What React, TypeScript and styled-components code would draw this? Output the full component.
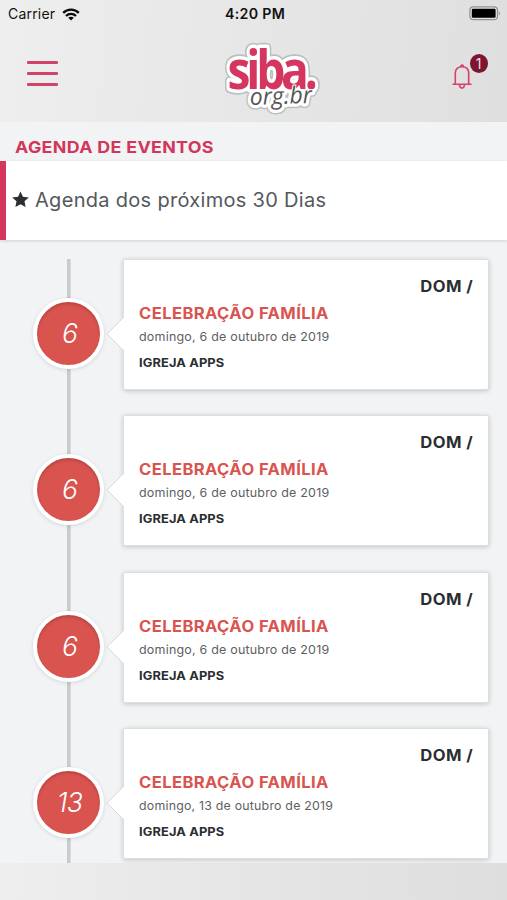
import React from "react";
import styled, { createGlobalStyle } from "styled-components";

const Global = createGlobalStyle`
  * { box-sizing: border-box; }
  body { margin: 0; background: #f1f3f5; }
`;

const Screen = styled.div`
  width: 507px;
  height: 900px;
  overflow: hidden;
  display: flex;
  flex-direction: column;
  background: #f1f3f5;
  font-family: Inter, "Open Sans", sans-serif;
  color: #2b2e31;
  white-space: nowrap;
`;

const Wide = styled.span<{ $scale: number; $origin?: string }>`
  display: inline-block;
  transform: scaleX(${(p) => p.$scale});
  transform-origin: ${(p) => p.$origin ?? "left"} center;
`;

const Header = styled.header`
  height: 122px;
  flex: none;
  background: linear-gradient(95deg, #efeeee 0%, #e7e7e7 45%, #dfdfdf 100%);
`;

const StatusBar = styled.div`
  height: 28px;
  padding: 1px 6px 0 8px;
  display: grid;
  grid-template-columns: 1fr auto 1fr;
  align-items: center;
  font-size: 14px;
  line-height: 26px;
  color: #111;
`;

const Carrier = styled.div`
  display: flex;
  align-items: center;
  gap: 7px;
  height: 26px;
  align-self: start;
  letter-spacing: 0.2px;
`;

const Clock = styled.div`
  align-self: start;
  padding-left: 1px;
  font-size: 14.2px;
  font-weight: 600;
  letter-spacing: 0.3px;
`;

const BatterySlot = styled.div`
  height: 25px;
  align-self: start;
  display: flex;
  align-items: center;
  justify-content: flex-end;
`;

const NavBar = styled.div`
  height: 93px;
  padding: 0 19px 0 27px;
  display: grid;
  grid-template-columns: 1fr 100px 1fr;
  align-items: start;
`;

const MenuButton = styled.button`
  width: 31px;
  height: 25px;
  margin-top: 33px;
  padding: 0;
  border: 0;
  background: none;
  display: flex;
  flex-direction: column;
  justify-content: space-between;
`;

const MenuLine = styled.span`
  width: 31px;
  height: 3px;
  border-radius: 1px;
  background: #cf4468;
`;

const Logo = styled.svg`
  display: block;
  width: 100px;
  height: 82px;
  margin: 10px 0 0 14.5px;
  overflow: visible;
`;

const BellButton = styled.button`
  position: relative;
  justify-self: end;
  width: 20px;
  height: 26px;
  margin: 36px 16px 0 0;
  padding: 0;
  border: 0;
  background: none;
  font-family: inherit;
`;

const Badge = styled.span`
  position: absolute;
  left: 17.5px;
  top: -10px;
  width: 18px;
  height: 19px;
  border-radius: 50%;
  background: #7b1530;
  color: #f4dfe4;
  font-size: 14px;
  line-height: 19px;
  text-align: center;
`;

const PageTitle = styled.h1`
  height: 39px;
  flex: none;
  margin: 0;
  padding: 6px 0 0 15px;
  font-size: 16.4px;
  line-height: 38px;
  font-weight: 700;
  letter-spacing: 0.3px;
  color: #d2365a;
`;

const Banner = styled.div`
  height: 79px;
  flex: none;
  padding: 0 0 2px 6px;
  display: flex;
  align-items: center;
  gap: 6px;
  border-left: 6px solid #d5365b;
  background: #fff;
  box-shadow: 0 1px 3px rgba(0, 0, 0, 0.14);
  font-size: 19.4px;
  letter-spacing: 0.3px;
  color: #55585b;
`;

const Timeline = styled.main`
  height: 623px;
  flex: none;
  overflow: hidden;
  padding: 19px 18px 0 33px;
`;

const Row = styled.article`
  height: 156.4px;
  display: grid;
  grid-template-columns: 71px 366px;
  column-gap: 19px;
  align-items: start;
`;

const Rail = styled.div`
  height: 156.4px;
  padding-top: 39px;
  display: flex;
  justify-content: center;
  background: linear-gradient(#c9cbcc, #c9cbcc) 33.6px 0 / 3.6px 100% no-repeat;
`;

const Day = styled.div`
  width: 71px;
  height: 71px;
  padding-left: 2px;
  border: 4.5px solid #fff;
  border-radius: 50%;
  background: #d9534f;
  box-shadow: 0 1px 4px rgba(0, 0, 0, 0.12), inset 0 2px 3px rgba(0, 0, 0, 0.16);
  color: #fff;
  font-size: 26.5px;
  line-height: 63px;
  font-style: italic;
  font-weight: 300;
  letter-spacing: -0.8px;
  text-align: center;
`;

const Card = styled.div`
  position: relative;
  height: 131px;
  padding: 17px 15px 0 16px;
  border: 1px solid #dcdfdf;
  border-radius: 2px;
  background: #fff;
  box-shadow: 0 1px 5px rgba(0, 0, 0, 0.2);
`;

const Pointer = styled.svg`
  position: absolute;
  left: -18px;
  top: 56px;
  width: 19px;
  height: 36px;
`;

const Weekday = styled.div`
  height: 20px;
  font-size: 15.5px;
  line-height: 20px;
  font-weight: 700;
  text-align: right;
  letter-spacing: 0.4px;
`;

const EventName = styled.h2`
  margin: 7px 0 0 -1px;
  font-size: 15.5px;
  line-height: 20px;
  font-weight: 700;
  letter-spacing: 0.4px;
  color: #d9534f;
`;

const EventDate = styled.div`
  margin: 4px 0 0 -1px;
  font-size: 12px;
  line-height: 18px;
  letter-spacing: 0.2px;
  color: #5d6063;
`;

const Organizer = styled.div`
  margin: 9px 0 0 -1px;
  font-size: 11.7px;
  line-height: 16px;
  font-weight: 700;
  letter-spacing: 0.1px;
`;

const Footer = styled.footer`
  flex: 1;
  background: linear-gradient(90deg, #efeeee 0%, #e6e6e6 45%, #dedede 100%);
`;

const events = [
  { day: "6", date: "domingo, 6 de outubro de 2019", stretch: 1.039 },
  { day: "6", date: "domingo, 6 de outubro de 2019", stretch: 1.039 },
  { day: "6", date: "domingo, 6 de outubro de 2019", stretch: 1.039 },
  { day: "13", date: "domingo, 13 de outubro de 2019", stretch: 1.031 },
];

const Wifi = () => (
  <svg width="18" height="13" viewBox="0 0 18 13" fill="none" stroke="#0b0b0b" strokeWidth="2.3">
    <path d="M1.2 4.9C5.5.5 12.5.5 16.8 4.9" />
    <path d="M4 8C6.9 5.2 11.1 5.2 14 8" />
    <path d="M6.2 9.8C7.7 8.3 10.3 8.3 11.8 9.8L9 12.6Z" fill="#0b0b0b" stroke="none" />
  </svg>
);

const Battery = () => (
  <svg width="32" height="15" viewBox="0 0 32 15">
    <rect x="0.9" y="0.9" width="27.6" height="12.8" rx="3.5" fill="#e2e2e2" stroke="#929292" strokeWidth="1.2" />
    <rect x="2.8" y="2.8" width="23.8" height="9" rx="1.2" fill="#000" />
    <path d="M29.8 5.2q2 2.1 0 4.2z" fill="#858585" />
  </svg>
);

const SibaLogo = () => (
  <Logo viewBox="0 0 100 82" strokeLinejoin="round">
    <defs>
      <text id="siba" transform="translate(5.5 51) scale(.87 1)" fontFamily="Open Sans" fontWeight="700" fontSize="53" letterSpacing="-4.8">siba.</text>
      <text id="orgbr" transform="translate(28 67) rotate(-2)" fontFamily="Open Sans" fontStyle="italic" fontSize="23.5" textLength="62" lengthAdjust="spacingAndGlyphs">org.br</text>
    </defs>
    <g fill="#b9c1c0" stroke="#b9c1c0">
      <use href="#siba" strokeWidth="10.5" />
      <use href="#orgbr" strokeWidth="9.5" />
    </g>
    <g fill="#fff" stroke="#fff">
      <use href="#siba" strokeWidth="7" />
      <use href="#orgbr" strokeWidth="6.5" />
    </g>
    <use href="#siba" fill="#d5365f" />
    <use href="#orgbr" fill="#555" stroke="#fff" strokeWidth="2" paintOrder="stroke" />
  </Logo>
);

const Bell = () => (
  <svg width="20" height="26" viewBox="0 0 20 26" fill="none" stroke="#d5426a" strokeWidth="1.6" strokeLinejoin="round" strokeLinecap="round">
    <path d="M1 20.2H19M3.3 20V9.3C3.3 5 6 2.8 10 2.8S16.7 5 16.7 9.3V20" />
    <path d="M8.6 2.6C8.6.6 11.4.6 11.4 2.6M7.6 20.8C7.6 25.2 12.4 25.2 12.4 20.8" />
  </svg>
);

const Star = () => (
  <svg width="17" height="17" viewBox="0 0 17 17" fill="#2b2f32">
    <path d="M8.5.4L10.9 5.7L16.8 6.4L12.5 10.3L13.6 16L8.5 13.2L3.4 16L4.5 10.3L.2 6.4L6.1 5.7Z" />
  </svg>
);

export default function App() {
  return (
    <Screen>
      <Global />
      <Header>
        <StatusBar>
          <Carrier>Carrier<Wifi /></Carrier>
          <Clock>4:20 PM</Clock>
          <BatterySlot><Battery /></BatterySlot>
        </StatusBar>
        <NavBar>
          <MenuButton aria-label="Menu"><MenuLine /><MenuLine /><MenuLine /></MenuButton>
          <SibaLogo />
          <BellButton><Bell /><Badge>1</Badge></BellButton>
        </NavBar>
      </Header>
      <PageTitle><Wide $scale={1.088}>AGENDA DE EVENTOS</Wide></PageTitle>
      <Banner><Star /><Wide $scale={1.031}>Agenda dos próximos 30 Dias</Wide></Banner>
      <Timeline>
        {events.map((event, index) => (
          <Row key={index}>
            <Rail><Day>{event.day}</Day></Rail>
            <Card>
              <Pointer viewBox="0 0 19 36">
                <path d="M18 1L1 18L18 35" fill="#fff" stroke="#d7dada" />
                <path d="M19 1V35" stroke="#fff" strokeWidth="2" />
              </Pointer>
              <Weekday><Wide $scale={1.075} $origin="right">DOM /</Wide></Weekday>
              <EventName><Wide $scale={1.067}>CELEBRAÇÃO FAMÍLIA</Wide></EventName>
              <EventDate><Wide $scale={event.stretch}>{event.date}</Wide></EventDate>
              <Organizer><Wide $scale={1.1}>IGREJA APPS</Wide></Organizer>
            </Card>
          </Row>
        ))}
      </Timeline>
      <Footer />
    </Screen>
  );
}
